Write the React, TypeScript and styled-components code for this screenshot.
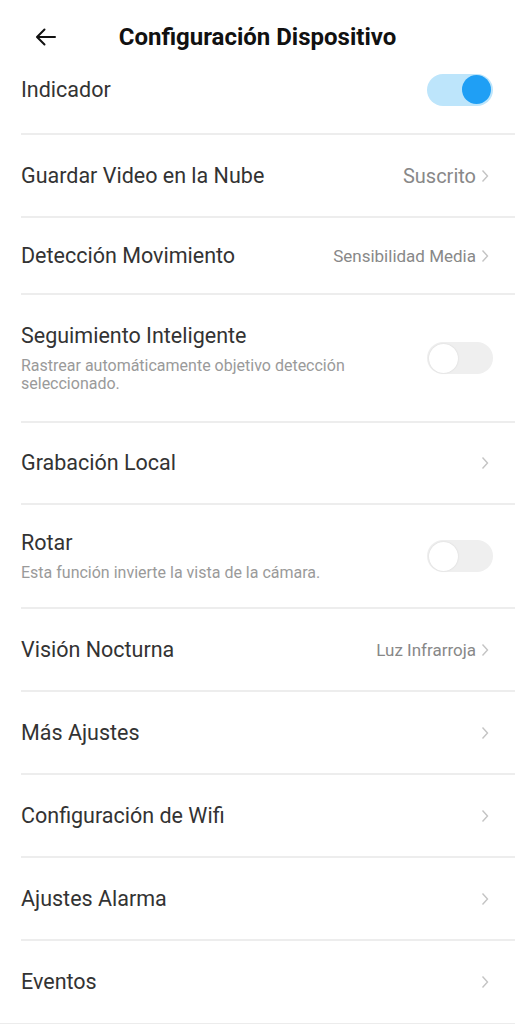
import styled, { createGlobalStyle } from 'styled-components'

const GlobalStyle = createGlobalStyle`
	html, body {
		margin: 0;
		padding: 0;
		background: #ffffff;
	}
	body {
		font-family: Roboto, 'Noto Sans', sans-serif;
		color: #222222;
	}
`

type Item = {
	title: string
	subtitle?: string
	value?: string
	big?: boolean
	toggle?: boolean
	checked?: boolean
	height: number
}

const items: Item[] = [
	{ title: 'Guardar Video en la Nube', value: 'Suscrito', big: true, height: 83 },
	{ title: 'Detección Movimiento', value: 'Sensibilidad Media', height: 77 },
	{
		title: 'Seguimiento Inteligente',
		subtitle: 'Rastrear automáticamente objetivo detección seleccionado.',
		toggle: true,
		height: 128,
	},
	{ title: 'Grabación Local', height: 82 },
	{
		title: 'Rotar',
		subtitle: 'Esta función invierte la vista de la cámara.',
		toggle: true,
		height: 104,
	},
	{ title: 'Visión Nocturna', value: 'Luz Infrarroja', height: 83 },
	{ title: 'Más Ajustes', height: 83 },
	{ title: 'Configuración de Wifi', height: 83 },
	{ title: 'Ajustes Alarma', height: 83 },
	{ title: 'Eventos', height: 82 },
]

export default function App() {
	return (
		<Page>
			<GlobalStyle />
			<Header>
				<BackButton aria-label='Volver'>
					<svg width='24' height='24' viewBox='0 0 24 24' fill='none'>
						<path
							d='M21 12H3.5M10.5 4.5L3 12l7.5 7.5'
							stroke='#111'
							strokeWidth='2'
							strokeLinecap='round'
							strokeLinejoin='round'
						/>
					</svg>
				</BackButton>
				<Title>Configuración Dispositivo</Title>
			</Header>

			<List>
				<Row $height={89}>
					<Texts>
						<RowTitle>Indicador</RowTitle>
					</Texts>
					<Switch $on />
				</Row>
				{items.map(item => (
					<Row key={item.title} $height={item.height}>
						<Texts>
							<RowTitle>{item.title}</RowTitle>
							{item.subtitle && <Subtitle>{item.subtitle}</Subtitle>}
						</Texts>
						{item.toggle ? (
							<Switch $on={!!item.checked} />
						) : (
							<Trailing>
								{item.value && <Value $big={!!item.big}>{item.value}</Value>}
								<Chevron width='8' height='14' viewBox='0 0 8 14'>
									<path d='M1.5 1.5L6.5 7l-5 5.5' stroke='#c4c4c4' strokeWidth='1.4' fill='none' />
								</Chevron>
							</Trailing>
						)}
					</Row>
				))}
			</List>
		</Page>
	)
}

const Page = styled.div`
	width: 515px;
	min-height: 1024px;
	background: #ffffff;
	overflow: hidden;
`

const Header = styled.header`
	position: relative;
	height: 46px;
	display: flex;
	align-items: center;
	justify-content: center;
	padding-top: 28px;
	box-sizing: border-box;
`

const BackButton = styled.button`
	position: absolute;
	left: 34px;
	top: 25px;
	padding: 0;
	border: 0;
	background: none;
	display: flex;
`

const Title = styled.h1`
	margin: 0;
	font-size: 24px;
	line-height: 28px;
	font-weight: 700;
	color: #111111;
`

const List = styled.div`
	display: flex;
	flex-direction: column;
	border-bottom: 4px solid #ececec;
`

const Row = styled.div<{ $height: number }>`
	height: ${p => p.$height}px;
	margin-left: 21px;
	padding-right: 22px;
	display: flex;
	align-items: center;
	justify-content: space-between;
	box-sizing: border-box;
	border-bottom: 2px solid #ededed;

	&:last-child {
		border-bottom: 0;
	}
`

const Texts = styled.div`
	display: flex;
	flex-direction: column;
	max-width: 350px;
`

const RowTitle = styled.div`
	font-size: 21.5px;
	color: #333333;
	line-height: 26px;
`

const Subtitle = styled.div`
	margin-top: 8px;
	font-size: 16px;
	line-height: 18px;
	color: #9a9a9a;
`

const Trailing = styled.div`
	display: flex;
	align-items: center;
	gap: 5px;
`

const Value = styled.span<{ $big: boolean }>`
	font-size: ${p => (p.$big ? '20px' : '17px')};
	color: #888888;
`

const Chevron = styled.svg`
	display: block;
	margin-right: 4px;
`

const Switch = styled.div<{ $on: boolean }>`
	position: relative;
	width: 66px;
	height: 32px;
	border-radius: 16px;
	background: ${p => (p.$on ? '#bde5fb' : '#efefef')};
	flex-shrink: 0;

	&::after {
		content: '';
		position: absolute;
		top: 1.5px;
		left: ${p => (p.$on ? '35px' : '2px')};
		width: 29px;
		height: 29px;
		border-radius: 50%;
		background: ${p => (p.$on ? '#1f9ff5' : '#ffffff')};
		box-shadow: ${p => (p.$on ? 'none' : '0 0 2px rgba(0,0,0,0.12)')};
	}
`
